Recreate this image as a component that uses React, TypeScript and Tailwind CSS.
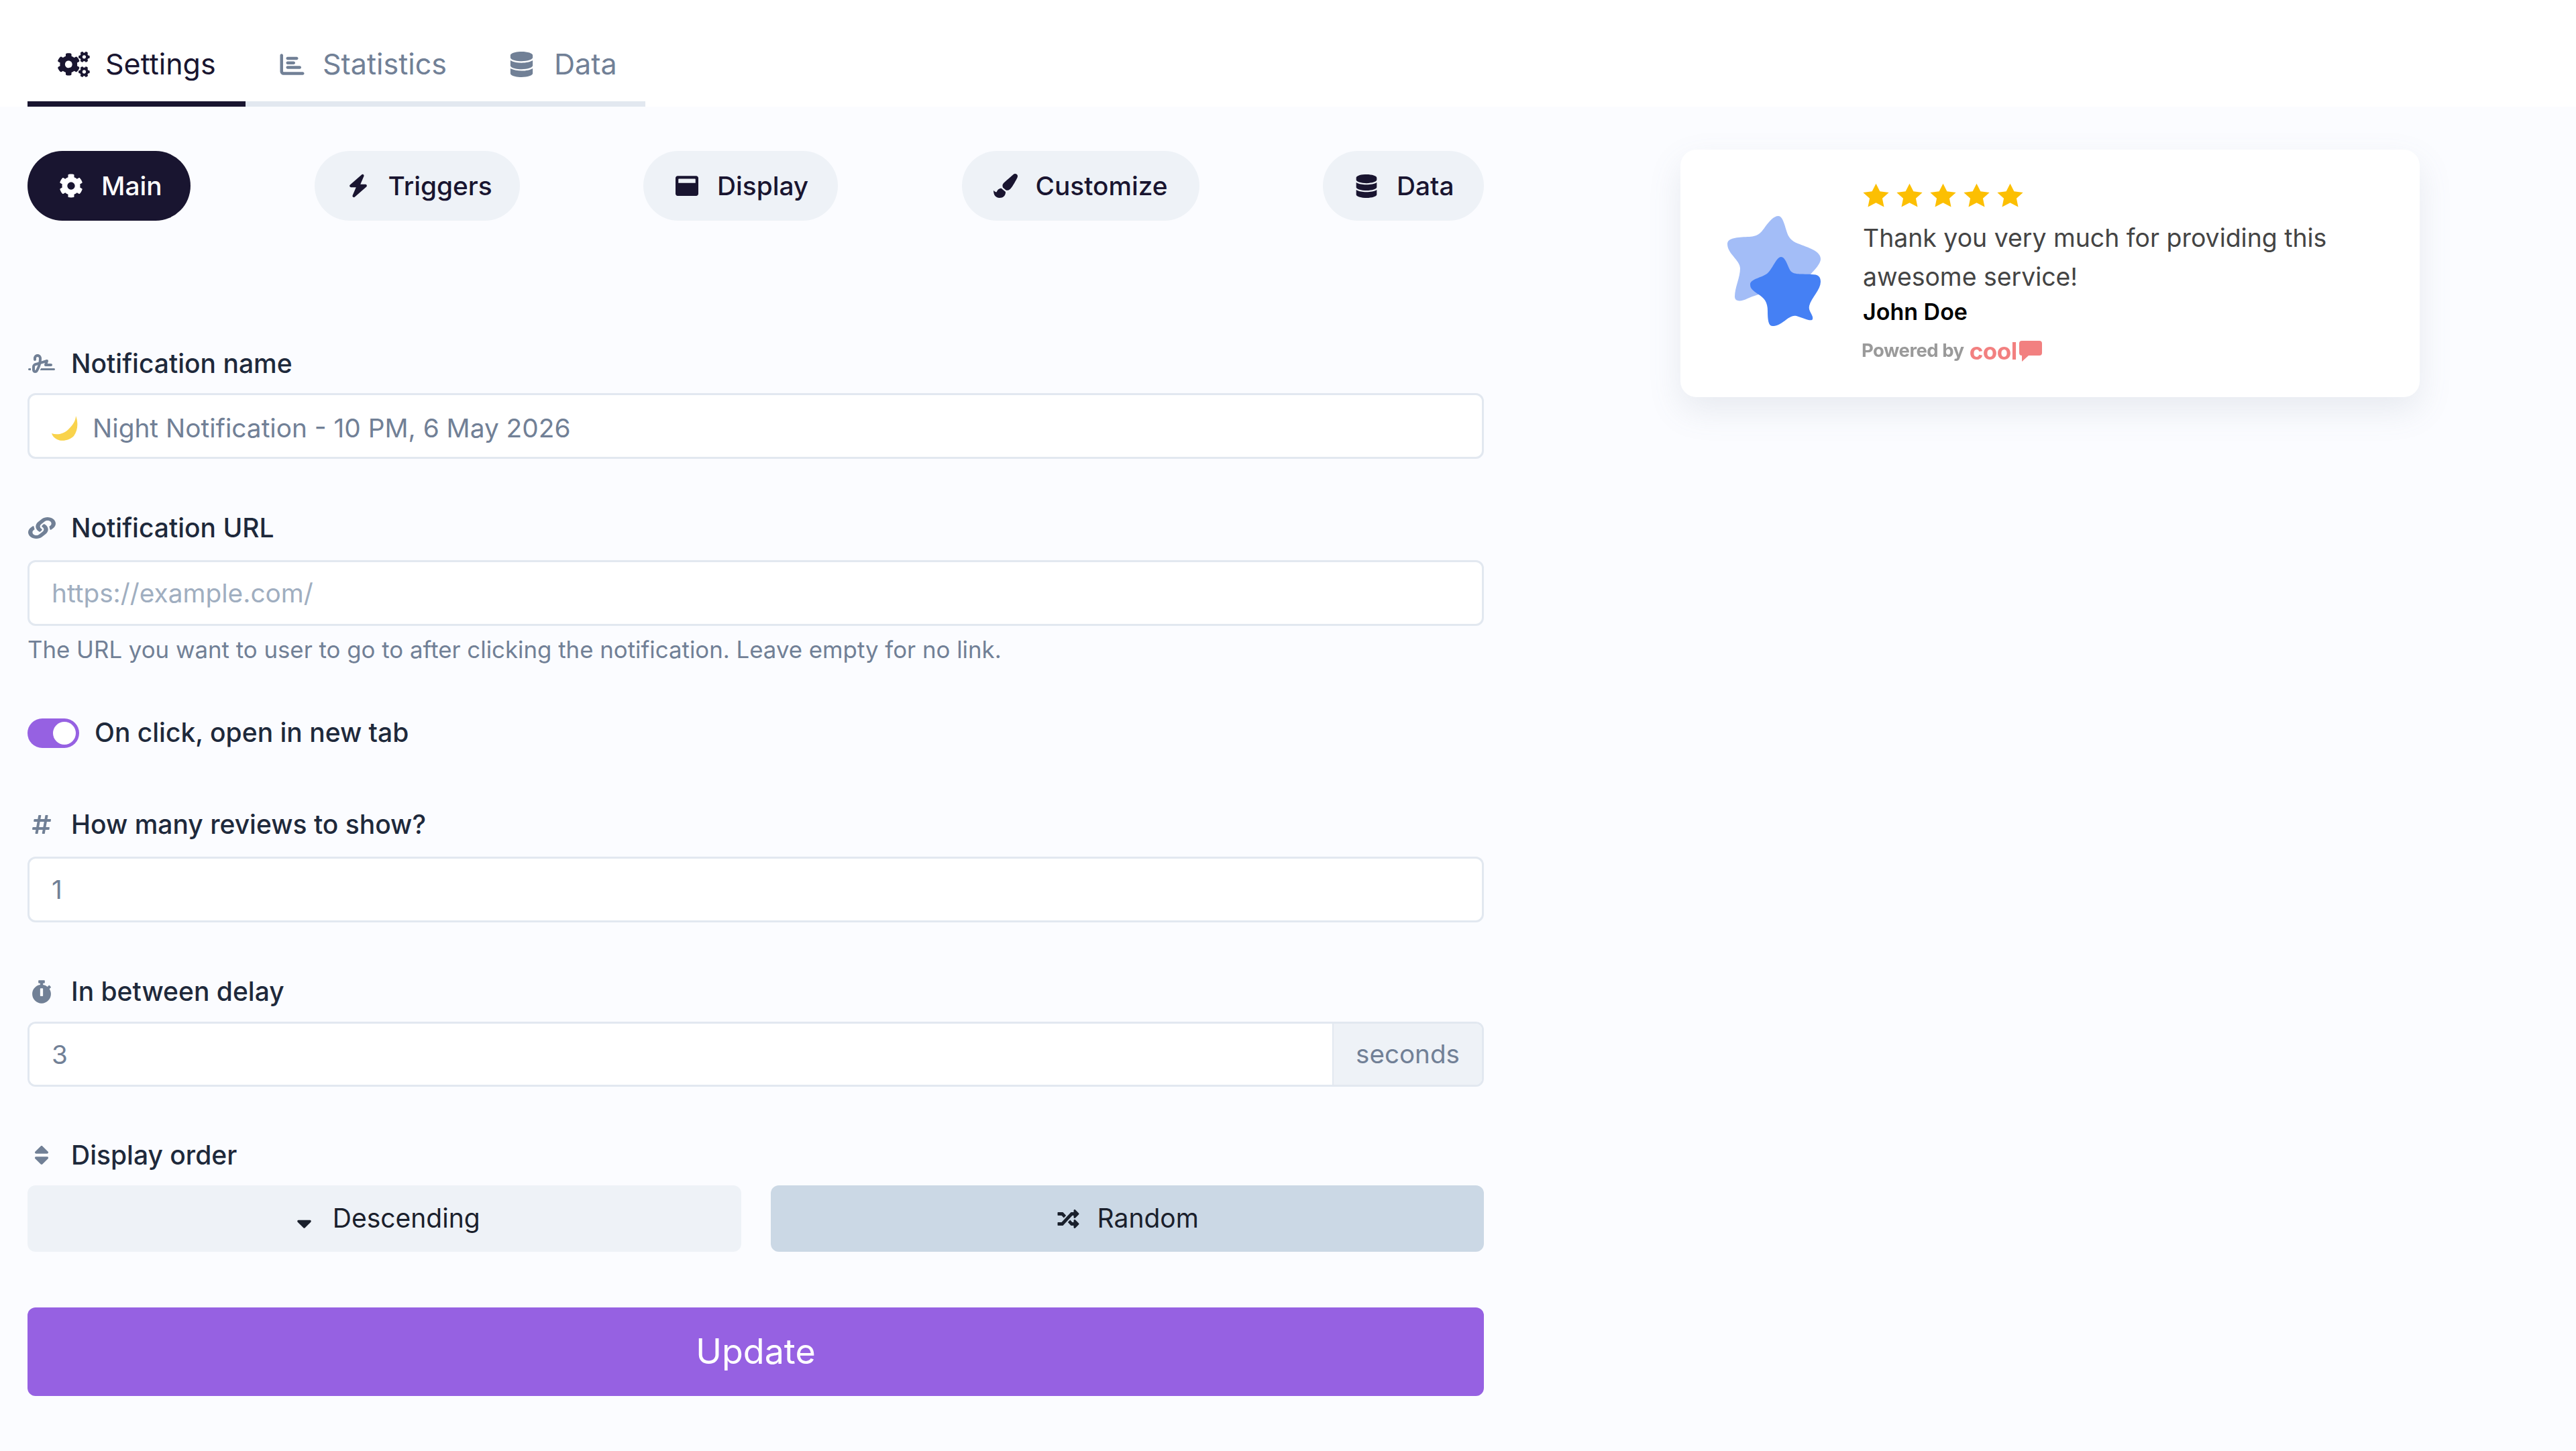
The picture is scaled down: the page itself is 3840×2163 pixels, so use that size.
import type { ReactNode } from "react";
import {
  FaCog,
  FaCogs,
  FaDatabase,
  FaLink,
  FaPaintBrush,
  FaRandom,
  FaSort,
  FaSortDown,
  FaStopwatch,
  FaHashtag,
  FaWindowMaximize,
} from "react-icons/fa";
import { FaBolt, FaChartBar, FaSignature } from "react-icons/fa6";

function Pill({ icon, label, className }: { icon: ReactNode; label: string; className: string }) {
  return (
    <div className={`flex h-[104px] items-center gap-[25px] rounded-full pl-[45px] ${className}`}>
      <span className="flex w-[40px] justify-center">{icon}</span>
      <span className="text-[38.8px] font-medium leading-none">{label}</span>
    </div>
  );
}

function Label({ icon, children, className }: { icon: ReactNode; children: ReactNode; className: string }) {
  return (
    <div className={`flex h-[48px] items-center gap-[23px] text-[39px] font-medium text-[#1e293b] ${className}`}>
      <span className="flex w-[42px] justify-center text-[#718096]">{icon}</span>
      {children}
    </div>
  );
}

function Field({ children, className }: { children: ReactNode; className: string }) {
  return (
    <div
      className={`flex h-[98px] items-center rounded-[12px] border-[3px] border-[#e2e8f0] bg-white px-[33px] text-[38.8px] ${className}`}
    >
      {children}
    </div>
  );
}

function Moon() {
  return (
    <svg viewBox="0 0 39 38" className="mr-[22px] h-[38px] w-[39px]">
      <path
        d="M36 0C40 10 39 22 33 30C27 36 16 39 8 35C4 33 1 30 0 26C8 29 18 27 25 20C32 13 36 7 36 0Z"
        fill="#f9d34c"
      />
    </svg>
  );
}

function BlobStars() {
  return (
    <svg viewBox="0 0 150 172" className="h-[172px] w-[150px] shrink-0">
      <path
        d="M81 4C87 4 90 16 93 26C96 36 100 41 110 45C125 51 144 56 144 68C144 78 128 90 122 100C116 110 70 112 35 127C25 132 16 132 16 124C16 110 24 96 24 82C24 70 5 60 5 46C5 36 20 36 35 35C50 35 54 30 60 22C67 12 74 4 81 4Z"
        fill="#a3bdf7"
      />
      <path
        d="M85 65C91 65 94 76 98 84C102 92 112 90 130 91C140 91 144 94 144 102C144 114 130 126 127 138C125 146 134 152 132 158C130 162 118 156 108 153C96 150 88 168 72 168C66 168 65 158 65 146C65 132 60 126 50 120C42 114 39 112 39 106C39 98 56 96 64 90C72 84 78 65 85 65Z"
        fill="#4580f4"
      />
    </svg>
  );
}

function Star() {
  return (
    <svg viewBox="0 0 24 24" preserveAspectRatio="none" className="h-[37px] w-[39px]">
      <polygon
        points="12,0.5 15.6,8 23.8,9 17.8,14.8 19.4,23 12,19 4.6,23 6.2,14.8 0.2,9 8.4,8"
        fill="#fcbf02"
      />
    </svg>
  );
}

export default function App() {
  return (
    <div className="min-h-[2163px] bg-[#fbfcff] font-['Inter',sans-serif]">
      <header className="flex h-[159px] items-start bg-white pl-[41px]">
        <div className="flex text-[43px] leading-none">
          <div className="flex h-[159px] w-[325px] items-center gap-[23px] border-b-[8px] border-[#191530] pl-[45px] pt-[40px] text-[#191530]">
            <FaCogs className="h-[38px] w-[48px]" />
            <span>Settings</span>
          </div>
          <div className="flex h-[159px] w-[349px] items-center gap-[26px] border-b-[8px] border-[#e2e8f0] pl-[50px] pt-[40px] text-[#718096]">
            <FaChartBar className="h-[36px] w-[39px]" />
            <span>Statistics</span>
          </div>
          <div className="flex h-[159px] w-[247px] items-center gap-[31px] border-b-[8px] border-[#e2e8f0] pl-[45px] pt-[40px] text-[#718096]">
            <FaDatabase className="h-[38px] w-[35px]" />
            <span>Data</span>
          </div>
        </div>
      </header>

      <main className="flex pl-[41px]">
        <div className="w-[2171px] shrink-0 pt-[66px]">
          <div className="flex justify-between">
            <Pill className="w-[243px] bg-[#191530] text-white" icon={<FaCog className="h-[36px] w-[36px]" />} label="Main" />
            <Pill className="w-[306px] bg-[#eef2f7] text-[#191530]" icon={<FaBolt className="h-[36px] w-[30px]" />} label="Triggers" />
            <Pill className="w-[290px] bg-[#eef2f7] text-[#191530]" icon={<FaWindowMaximize className="h-[34px] w-[34px]" />} label="Display" />
            <Pill className="w-[354px] bg-[#eef2f7] text-[#191530]" icon={<FaPaintBrush className="h-[36px] w-[36px]" />} label="Customize" />
            <Pill className="w-[240px] bg-[#eef2f7] text-[#191530]" icon={<FaDatabase className="h-[35px] w-[32px]" />} label="Data" />
          </div>

          <Label className="mt-[189px]" icon={<FaSignature className="h-[32px] w-[42px]" />}>
            Notification name
          </Label>
          <Field className="mt-[20px] pt-[7px] text-[#718096]">
            <Moon />
            Night Notification - 10 PM, 6 May 2026
          </Field>

          <Label className="mt-[79px]" icon={<FaLink preserveAspectRatio="none" className="h-[32px] w-[41px]" />}>
            Notification URL
          </Label>
          <Field className="mt-[24px] pt-[1px] text-[#a0aec0]">https://example.com/</Field>
          <p className="mt-[15px] text-[34.8px] leading-[41px] text-[#718096]">
            The URL you want to user to go to after clicking the notification. Leave empty for no link.
          </p>

          <div className="mt-[82px] flex items-center gap-[23px] text-[39px] font-medium leading-none text-[#1e293b]">
            <div className="flex h-[44px] w-[77px] items-center justify-end rounded-full bg-[#9661e2] pr-[5px]">
              <div className="h-[34px] w-[34px] rounded-full bg-white" />
            </div>
            <span className="-mt-[3px]">On click, open in new tab</span>
          </div>

          <Label className="mt-[90px]" icon={<FaHashtag className="h-[32px] w-[30px]" />}>
            How many reviews to show?
          </Label>
          <Field className="mt-[24px] pt-[1px] text-[#718096]">1</Field>

          <Label className="mt-[79px]" icon={<FaStopwatch className="h-[35px] w-[30px]" />}>
            In between delay
          </Label>
          <div className="mt-[21px] flex h-[97px] overflow-hidden rounded-[12px] border-[3px] border-[#e2e8f0] text-[38.6px] text-[#718096]">
            <div className="flex flex-1 items-center bg-white px-[33px] pt-[3px]">3</div>
            <div className="flex w-[223px] items-center justify-center border-l-[2px] border-[#e2e8f0] bg-[#eef2f7]">
              seconds
            </div>
          </div>

          <Label className="mt-[78px]" icon={<FaSort className="h-[36px] w-[24px]" />}>
            Display order
          </Label>
          <div className="mt-[21px] flex gap-[44px] text-[39px] text-[#1a202c]">
            <div className="flex h-[99px] flex-1 items-center justify-center gap-[31px] rounded-[12px] bg-[#eef2f7]">
              <FaSortDown className="ml-[12px] h-[37px] w-[23px]" />
              Descending
            </div>
            <div className="flex h-[99px] flex-1 items-center justify-center gap-[25px] rounded-[12px] bg-[#cbd8e5]">
              <FaRandom className="h-[32px] w-[37px]" />
              Random
            </div>
          </div>

          <div className="mt-[83px] flex h-[132px] items-center justify-center rounded-[12px] bg-[#9661e2] text-[52px] text-white">
            Update
          </div>
        </div>

        <div className="ml-[293px] pt-[64px]">
          <div className="flex h-[369px] w-[1102px] items-start rounded-[24px] bg-white pl-[65px] shadow-[0_20px_50px_rgba(100,116,139,0.13)]">
            <div className="mt-[95px]">
              <BlobStars />
            </div>
            <div className="ml-[57px] pt-[50px]">
              <div className="flex gap-[11px]">
                <Star />
                <Star />
                <Star />
                <Star />
                <Star />
              </div>
              <p className="mt-[16px] w-[780px] text-[37.4px] leading-[58px] text-[#444444]">
                Thank you very much for providing this awesome service!
              </p>
              <p className="mt-[4px] text-[34px] font-semibold leading-[38px] text-black">John Doe</p>
              <div className="-ml-[2px] mt-[24px] flex h-[30px] items-center blur-[0.7px]">
                <span className="text-[27.5px] font-bold tracking-[-0.5px] text-[#9a9a9a]">Powered by</span>
                <span className="ml-[8px] text-[35px] font-bold tracking-[-0.5px] text-[#f28080]">cool</span>
                <svg viewBox="0 0 34 31" className="ml-[3px] h-[31px] w-[34px]">
                  <path d="M4 0H30Q34 0 34 4V18Q34 22 30 22H14L4 31V22Q0 22 0 18V4Q0 0 4 0Z" fill="#f28080" />
                </svg>
              </div>
            </div>
          </div>
        </div>
      </main>
    </div>
  );
}
